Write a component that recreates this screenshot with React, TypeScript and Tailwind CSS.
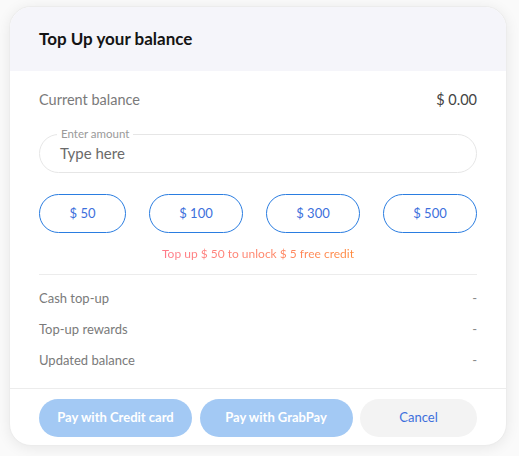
import React from "react";

export default function App() {
  const amounts = [
    { label: "$ 50", w: "w-[87px]" },
    { label: "$ 100", w: "w-[94px]" },
    { label: "$ 300", w: "w-[94px]" },
    { label: "$ 500", w: "w-[94px]" },
  ];
  const rows = ["Cash top-up", "Top-up rewards", "Updated balance"];
  return (
    <div
      className="w-[519px] h-[456px] bg-[#fafafa] pl-[9px] pt-[6px]"
      style={{ fontFamily: "Lato, 'Noto Sans', sans-serif" }}
    >
      <div className="w-[498px] h-[440px] bg-white rounded-[22px] overflow-hidden shadow-[0_2px_14px_rgba(0,0,0,0.08)] border border-[#ececec] flex flex-col">
        <div className="h-[64px] bg-[#f5f5fa] flex items-center px-[29px] shrink-0">
          <h1 className="text-[17px] font-bold text-[#141414]">Top Up your balance</h1>
        </div>
        <div className="px-[29px] pt-[20px] flex flex-col">
          <div className="flex justify-between items-center h-[18px]">
            <span className="text-[14.5px] text-[#7a7a7a]">Current balance</span>
            <span className="text-[14.5px] text-[#444]">$ 0.00</span>
          </div>
          <div className="relative mt-[25px] h-[39px] rounded-full border border-[#e6e6e6] flex items-center pl-[20px]">
            <span className="absolute -top-[8px] left-[17px] bg-white px-[4px] text-[11.5px] leading-[14px] text-[#9a9a9a]">
              Enter amount
            </span>
            <span className="text-[15px] text-[#6a6a6a]">Type here</span>
          </div>
          <div className="mt-[21px] flex justify-between">
            {amounts.map((a) => (
              <button
                key={a.label}
                className={`${a.w} h-[39px] rounded-full border border-[#2a7de1] text-[13px] text-[#3d6fdc] flex items-center justify-center`}
              >
                {a.label}
              </button>
            ))}
          </div>
          <div className="mt-[13px] h-[16px] flex justify-center">
            <span className="text-[12px] leading-[16px] bg-gradient-to-r from-[#ff7b8a] to-[#ff8a3d] bg-clip-text text-transparent">
              Top up $ 50 to unlock $ 5 free credit
            </span>
          </div>
          <div className="mt-[12px] h-px bg-[#ececec]" />
          <div className="pt-[8px] pb-[12px] flex flex-col">
            {rows.map((r) => (
              <div key={r} className="h-[31px] flex justify-between items-center">
                <span className="text-[13px] text-[#7a7a7a]">{r}</span>
                <span className="text-[13px] text-[#8a8a8a]">-</span>
              </div>
            ))}
          </div>
        </div>
        <div className="border-t border-[#ececec] px-[29px] pt-[10px] flex gap-[7.5px]">
          <button className="w-[153px] h-[38px] rounded-full bg-[#a3c9f4] text-white text-[13px] font-bold">
            Pay with Credit card
          </button>
          <button className="w-[153px] h-[38px] rounded-full bg-[#a3c9f4] text-white text-[13px] font-bold">
            Pay with GrabPay
          </button>
          <button className="w-[117px] h-[38px] rounded-full bg-[#f3f3f3] text-[#3d6fdc] text-[13px]">
            Cancel
          </button>
        </div>
      </div>
    </div>
  );
}
